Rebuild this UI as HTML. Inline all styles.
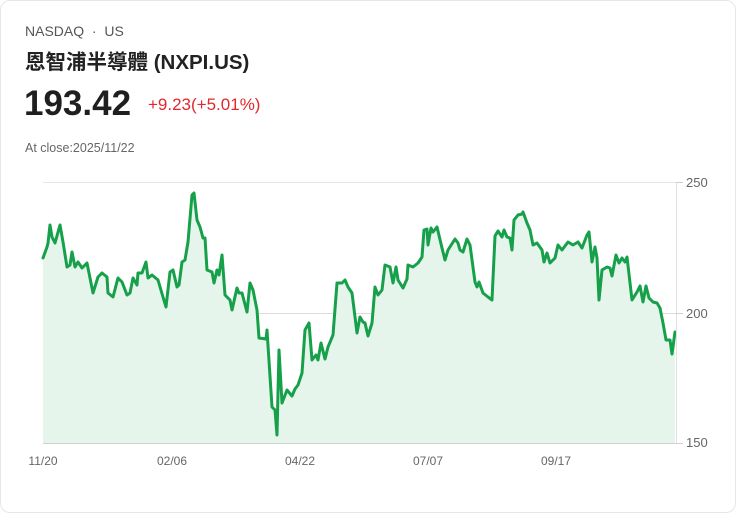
<!DOCTYPE html>
<html><head><meta charset="utf-8"><style>
html,body{margin:0;padding:0;background:#fff;}
body{width:736px;height:513px;position:relative;overflow:hidden;font-family:"Liberation Sans","Noto Sans CJK TC",sans-serif;}
.card{position:absolute;left:0;top:0;width:734px;height:511px;border:1px solid #e3e7ee;border-radius:10px;background:#fff;}
.t{position:absolute;white-space:nowrap;}
</style></head><body>
<div class="card"></div>
<div class="t" style="left:25px;top:23px;font-size:14px;color:#555;">NASDAQ &nbsp;·&nbsp; US</div>
<div class="t" style="left:25px;top:45px;font-size:20.5px;font-weight:bold;color:#222;">恩智浦半導體 (NXPI.US)</div>
<div class="t" style="left:24px;top:84px;font-size:35px;font-weight:bold;color:#1f1f1f;">193.42</div>
<div class="t" style="left:148px;top:95px;font-size:17px;color:#e0282e;">+9.23(+5.01%)</div>
<div class="t" style="left:25px;top:141px;font-size:12.5px;color:#666;">At close:2025/11/22</div>
<svg style="position:absolute;left:0;top:0" width="736" height="513">
<line x1="43" y1="182.5" x2="676" y2="182.5" stroke="#e6e6e6"/>
<line x1="43" y1="313.5" x2="676" y2="313.5" stroke="#dcdcdc"/>
<polygon fill="#e6f5ec" points="43,258 47,247 48,243 50,225 52,237 55,243 60,225 63,242 67,267 70,265 72,252 75,267 78,262 82,268 87,263 90,278 93,293 98,277 102,273 107,277 108,293 113,297 118,278 122,282 127,295 130,293 133,278 137,285 138,273 142,273 146,262 148,278 152,275 158,280 163,297 166,307 170,272 173,270 177,287 179,285 182,262 185,260 188,242 192,195 194,193 197,220 200,227 203,238 205,238 207,270 212,272 214,283 217,270 219,275 222,255 225,295 230,300 232,310 237,288 239,293 242,293 247,312 250,283 253,290 257,310 259,338 266,339 267,330 272,407 275,410 277,435 279,350 282,403 287,390 292,396 295,389 298,385 302,373 305,330 309,323 312,360 316,355 318,360 321,343 325,359 328,347 333,335 337,283 342,283 345,280 348,287 352,293 357,333 360,317 363,322 365,323 368,336 372,323 375,287 378,295 382,290 385,265 390,267 393,283 396,267 398,280 403,288 407,279 408,265 413,267 418,263 422,257 424,230 427,229 428,245 431,228 433,232 437,227 442,248 445,260 448,250 455,239 458,243 460,250 463,252 467,239 470,245 475,282 477,287 479,282 483,293 488,297 492,300 495,236 498,231 502,237 504,230 507,237 510,238 512,250 514,220 518,215 522,214 523,212 527,223 530,230 533,245 537,243 542,250 544,262 547,253 550,263 555,258 558,245 562,250 565,246 568,242 573,245 578,242 582,248 587,235 589,232 592,262 595,247 597,258 599,300 602,270 607,267 610,268 612,276 616,255 619,263 622,258 625,262 627,257 632,300 637,292 640,286 643,302 646,286 649,298 653,302 657,303 660,308 663,323 666,340 670,340 672,354 675,332 675,443 43,443"/>
<polyline fill="none" stroke="#16a04a" stroke-width="3" stroke-linejoin="round" stroke-linecap="round" points="43,258 47,247 48,243 50,225 52,237 55,243 60,225 63,242 67,267 70,265 72,252 75,267 78,262 82,268 87,263 90,278 93,293 98,277 102,273 107,277 108,293 113,297 118,278 122,282 127,295 130,293 133,278 137,285 138,273 142,273 146,262 148,278 152,275 158,280 163,297 166,307 170,272 173,270 177,287 179,285 182,262 185,260 188,242 192,195 194,193 197,220 200,227 203,238 205,238 207,270 212,272 214,283 217,270 219,275 222,255 225,295 230,300 232,310 237,288 239,293 242,293 247,312 250,283 253,290 257,310 259,338 266,339 267,330 272,407 275,410 277,435 279,350 282,403 287,390 292,396 295,389 298,385 302,373 305,330 309,323 312,360 316,355 318,360 321,343 325,359 328,347 333,335 337,283 342,283 345,280 348,287 352,293 357,333 360,317 363,322 365,323 368,336 372,323 375,287 378,295 382,290 385,265 390,267 393,283 396,267 398,280 403,288 407,279 408,265 413,267 418,263 422,257 424,230 427,229 428,245 431,228 433,232 437,227 442,248 445,260 448,250 455,239 458,243 460,250 463,252 467,239 470,245 475,282 477,287 479,282 483,293 488,297 492,300 495,236 498,231 502,237 504,230 507,237 510,238 512,250 514,220 518,215 522,214 523,212 527,223 530,230 533,245 537,243 542,250 544,262 547,253 550,263 555,258 558,245 562,250 565,246 568,242 573,245 578,242 582,248 587,235 589,232 592,262 595,247 597,258 599,300 602,270 607,267 610,268 612,276 616,255 619,263 622,258 625,262 627,257 632,300 637,292 640,286 643,302 646,286 649,298 653,302 657,303 660,308 663,323 666,340 670,340 672,354 675,332"/>
<line x1="43" y1="443.5" x2="676" y2="443.5" stroke="#d0d0d0"/>
<line x1="676.5" y1="182" x2="676.5" y2="443" stroke="#e0e0e0"/>
<line x1="676" y1="182.5" x2="683" y2="182.5" stroke="#d0d0d0"/>
<line x1="676" y1="313.5" x2="683" y2="313.5" stroke="#d0d0d0"/>
<line x1="676" y1="443.5" x2="683" y2="443.5" stroke="#d0d0d0"/>
<g font-family="Liberation Sans, sans-serif" font-size="13" fill="#666">
<text x="686" y="187">250</text>
<text x="686" y="318">200</text>
<text x="686" y="447">150</text>
</g>
<g font-family="Liberation Sans, sans-serif" font-size="12" fill="#666" text-anchor="middle">
<text x="43" y="465">11/20</text>
<text x="172" y="465">02/06</text>
<text x="300" y="465">04/22</text>
<text x="428" y="465">07/07</text>
<text x="556" y="465">09/17</text>
</g>
</svg>
</body></html>
